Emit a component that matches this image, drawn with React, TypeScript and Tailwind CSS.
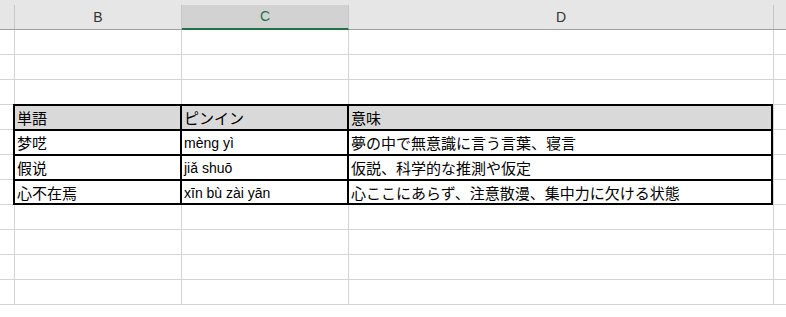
import React from 'react'

const words = [
    { word: '梦呓', pinyin: 'mèng yì', meaning: '夢の中で無意識に言う言葉、寝言' },
    { word: '假说', pinyin: 'jiǎ shuō', meaning: '仮説、科学的な推測や仮定' },
    { word: '心不在焉', pinyin: 'xīn bù zài yān', meaning: '心ここにあらず、注意散漫、集中力に欠ける状態' },
]

const font = "font-['Liberation_Sans','Noto_Sans_CJK_JP',sans-serif]"

// plain empty spreadsheet row
function GridRow() {
    return (
        <div className="flex h-[25px] shrink-0">
            <div className="w-[15px] border-r border-b border-[#d4d4d4]" />
            <div className="w-[167px] border-r border-b border-[#d4d4d4]" />
            <div className="w-[167px] border-r border-b border-[#d4d4d4]" />
            <div className="w-[425px] border-r border-b border-[#d4d4d4]" />
            <div className="flex-1 border-b border-[#d4d4d4]" />
        </div>
    )
}

export default function App() {
    return (
        <div className={`w-[786px] h-[317px] overflow-hidden bg-white ${font}`}>
            {/* column headers */}
            <div className="flex h-[30px] items-end bg-[#e6e6e6] border-b border-[#a0a0a0]">
                <div className="w-[15px] h-[24px] border-r border-[#c6c6c6]" />
                <div className="w-[167px] h-[24px] border-r border-[#c6c6c6] flex items-center justify-center text-[14px] text-[#333]">B</div>
                <div className="w-[167px] h-[25px] mb-[-1px] border-r border-[#c6c6c6] border-b-2 border-b-[#217346] bg-[#d2d2d2] flex items-center justify-center text-[14px] text-[#217346]">C</div>
                <div className="w-[425px] h-[24px] border-r border-[#c6c6c6] flex items-center justify-center text-[14px] text-[#333]">D</div>
                <div className="flex-1" />
            </div>

            <GridRow />
            <GridRow />
            <GridRow />

            {/* word table */}
            <div className="flex h-[100px] shrink-0">
                <div className="w-[14px] flex flex-col">
                    {[0, 1, 2, 3].map((i) => (
                        <div key={i} className="h-[25px] border-b border-[#d4d4d4]" />
                    ))}
                </div>
                <div className="w-[760px] h-[101px] ml-[-1px] mt-[-1px] border-2 border-black flex flex-col text-[15px] text-black">
                    <div className="flex h-[25px] border-b-2 border-black bg-[#d9d9d9]">
                        <div className="w-[167px] border-r-2 border-black pl-[2px] pt-[2px] leading-[21px]">単語</div>
                        <div className="w-[167px] border-r-2 border-black pl-[2px] pt-[2px] leading-[21px]">ピンイン</div>
                        <div className="flex-1 pl-[2px] pt-[2px] leading-[21px]">意味</div>
                    </div>
                    {words.map((w, i) => (
                        <div
                            key={w.word}
                            className={`flex ${i < words.length - 1 ? 'h-[25px] border-b-2 border-black' : 'h-[22px]'}`}
                        >
                            <div className="w-[167px] border-r-2 border-black pl-[2px] pt-[2px] leading-[21px]">{w.word}</div>
                            <div className="w-[167px] border-r-2 border-black pl-[2px] pt-[2px] leading-[21px] text-[14px]">{w.pinyin}</div>
                            <div className="flex-1 pl-[2px] pt-[2px] leading-[21px] whitespace-nowrap">{w.meaning}</div>
                        </div>
                    ))}
                </div>
                <div className="flex-1 flex flex-col border-l border-[#d4d4d4]">
                    {[0, 1, 2, 3].map((i) => (
                        <div key={i} className="h-[25px] border-b border-[#d4d4d4]" />
                    ))}
                </div>
            </div>

            <GridRow />
            <GridRow />
            <GridRow />
            <GridRow />
        </div>
    )
}
